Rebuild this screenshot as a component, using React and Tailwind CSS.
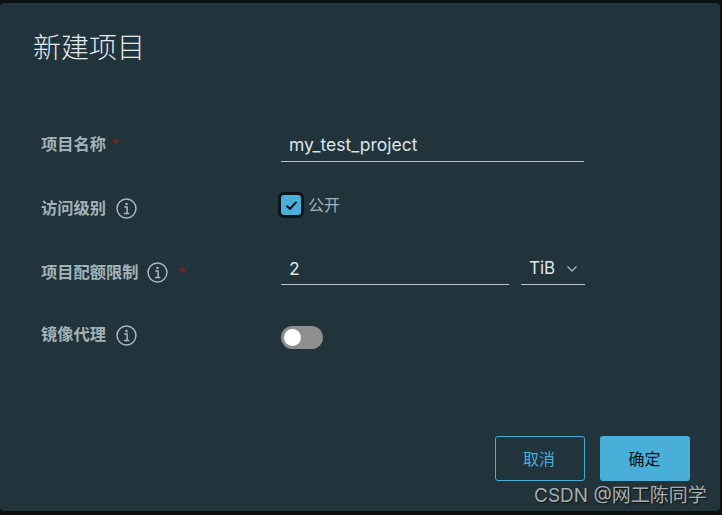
const cjk = "font-['Inter','Noto_Sans_CJK_SC',sans-serif]";

function InfoIcon() {
  return (
    <svg width="21" height="21" viewBox="0 0 20 20" fill="none" className="shrink-0 text-[#a9b8bd]">
      <circle cx="10" cy="10" r="9" stroke="currentColor" strokeWidth="1.4" />
      <circle cx="10" cy="5.8" r="1.2" fill="currentColor" />
      <path d="M7.8 8.6h2.8v6M7.6 14.8h5" stroke="currentColor" strokeWidth="1.4" />
    </svg>
  );
}

function Required() {
  return <span className="text-[15px] font-bold text-[#7c2419]">*</span>;
}

function Label({ children }) {
  return <span className="text-[16.25px] leading-6 font-bold text-[#a3b2b7]">{children}</span>;
}

export default function App() {
  return (
    <div className={`relative h-[515px] w-[722px] overflow-hidden bg-[#0a0f12] pt-[3px] ${cjk}`}>
      <div className="flex h-[508px] w-[720px] flex-col rounded-[4px] bg-[#21333b]">
        <h1 className="pt-[28px] pl-[33px] text-[28px] leading-[34px] font-light text-[#e3e9eb]">新建项目</h1>

        <div className="mt-[63px] flex flex-col pl-[41px]">
          {/* Project name */}
          <div className="flex h-[34px] items-center">
            <div className="flex w-[240px] items-center gap-[5px] pb-[2px]">
              <Label>项目名称</Label>
              <Required />
            </div>
            <div className="flex h-[34px] w-[303px] items-center border-b border-[#b6c3c8] pt-[2px] pl-2 text-[17.5px] text-[#dfe5e8]">
              my_test_project
            </div>
          </div>

          {/* Access level */}
          <div className="mt-[30px] flex h-[26px] items-center">
            <div className="flex w-[237px] items-center gap-[10px] pt-[6px]">
              <Label>访问级别</Label>
              <InfoIcon />
            </div>
            <div className="flex items-center gap-[4px]">
              <span className="flex h-[26px] w-[26px] items-center justify-center rounded-[6px] border-[3px] border-[#0c1418] bg-[#49afd9]">
                <svg width="13" height="11" viewBox="0 0 14 12" fill="none">
                  <path d="M1.5 6.2 5.3 9.6 12.5 2" stroke="#0b1114" strokeWidth="2.2" />
                </svg>
              </span>
              <span className="text-[16px] text-[#a3b2b7]">公开</span>
            </div>
          </div>

          {/* Quota */}
          <div className="mt-[33px] flex h-[34px] items-center">
            <div className="flex w-[240px] items-center pt-[8px]">
              <Label>项目配额限制</Label>
              <span className="ml-[8px]"><InfoIcon /></span>
              <span className="ml-[10px]"><Required /></span>
            </div>
            <div className="flex h-[34px] w-[228px] items-center border-b border-[#b6c3c8] pt-[3px] pl-2 text-[17.5px] text-[#dfe5e8]">
              2
            </div>
            <div className="ml-[12px] flex h-[34px] w-[64px] items-center border-b border-[#b6c3c8] pt-[3px] pl-2 text-[17px] text-[#dfe5e8]">
              TiB
              <svg width="12" height="8" viewBox="0 0 12 8" fill="none" className="ml-[11px]">
                <path d="M1.5 1.5 6 6l4.5-4.5" stroke="#a9b8bd" strokeWidth="1.3" />
              </svg>
            </div>
          </div>

          {/* Proxy cache */}
          <div className="mt-[40px] flex h-[24px] items-center">
            <div className="flex w-[240px] items-center gap-[10px] pb-[3px]">
              <span className="-mt-[3px]"><Label>镜像代理</Label></span>
              <InfoIcon />
            </div>
            <span className="flex h-[23px] w-[42px] items-center rounded-full bg-[#8f8f8f] pl-[3px]">
              <span className="h-[17px] w-[17px] rounded-full bg-white" />
            </span>
          </div>
        </div>

        <div className="mt-auto flex justify-end gap-[15px] pr-[30px] pb-[30px]">
          <button className="h-[45px] w-[90px] rounded-[3px] border border-[#49afd9] pr-[2px] text-[16px] text-[#49afd9]">取消</button>
          <button className="h-[45px] w-[90px] rounded-[3px] bg-[#49afd9] pr-[1px] text-[16px] text-[#0b1114]">确定</button>
        </div>
      </div>

      {/* CSDN watermark */}
      <span className="absolute top-[484px] left-[534px] text-[19px] leading-6 whitespace-nowrap text-[#a6adb0] [text-shadow:1px_1px_1px_#111]">
        CSDN @网工陈同学
      </span>
    </div>
  );
}
